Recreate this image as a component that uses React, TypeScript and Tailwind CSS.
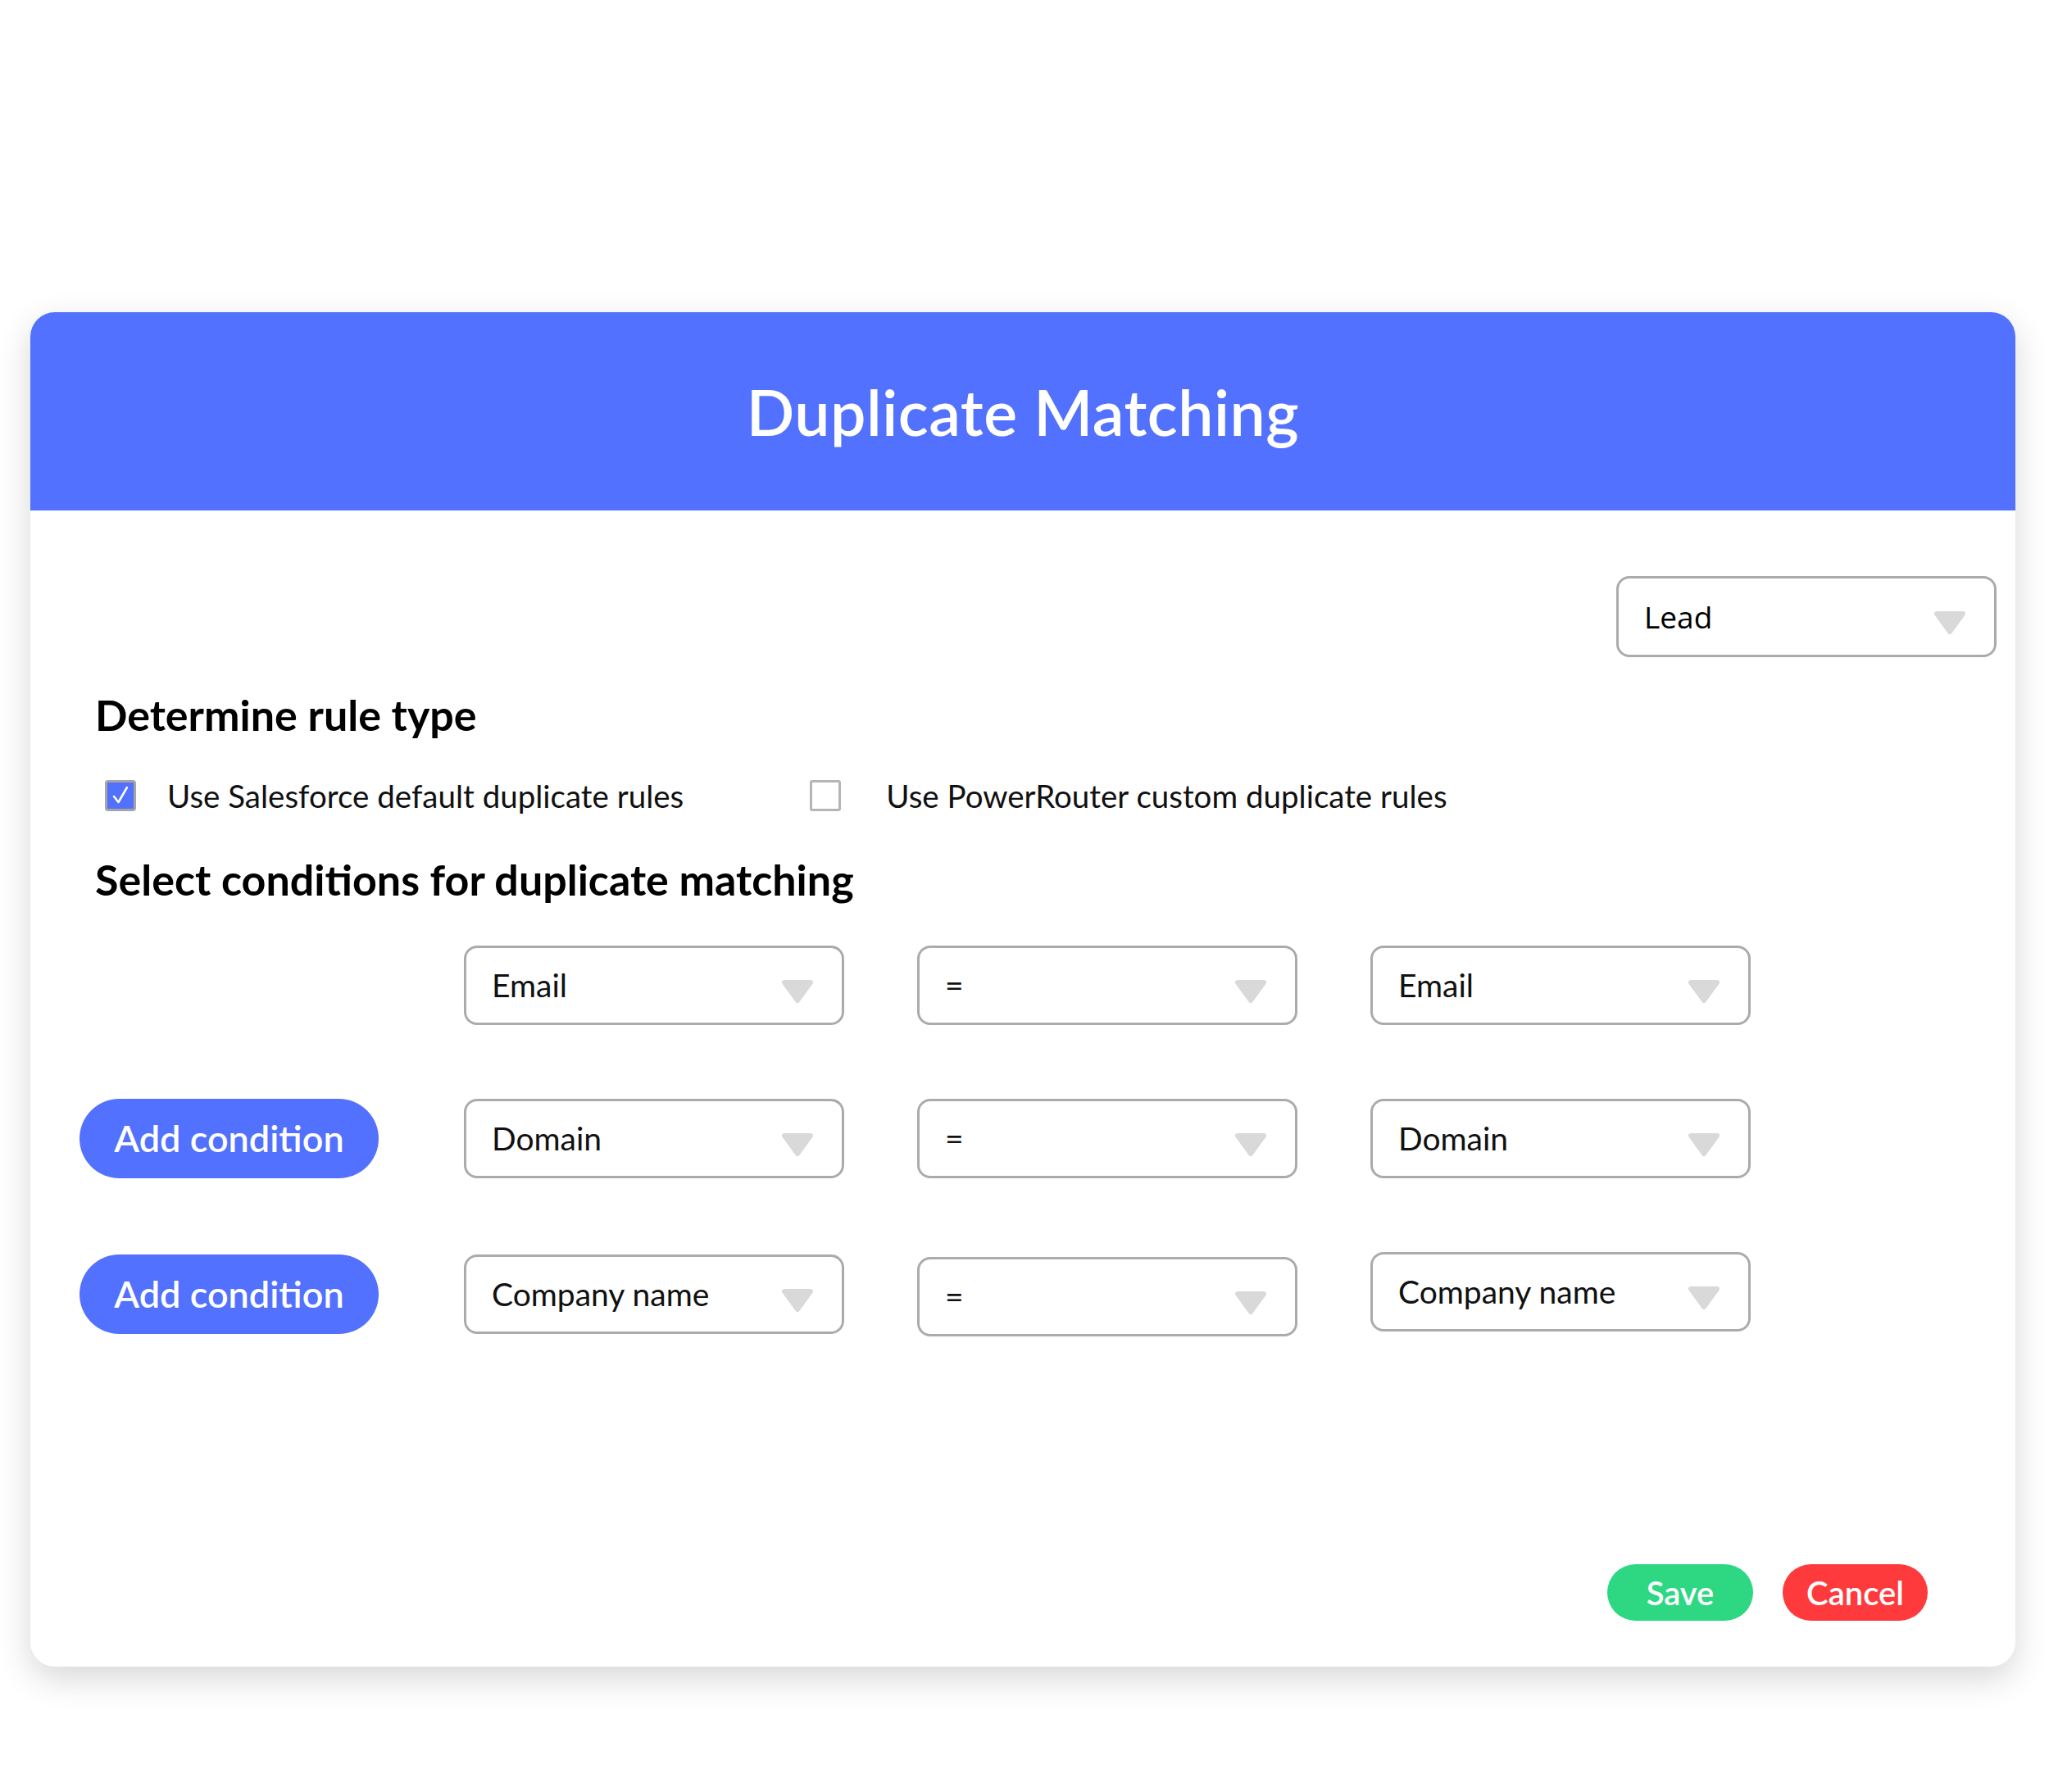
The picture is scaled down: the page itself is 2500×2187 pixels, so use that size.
import React from "react";

const Tri = () => (
  <svg width="40" height="30" viewBox="0 0 40 30" className="shrink-0 mt-[14px]">
    <polygon points="4,4 36,4 20,26" fill="#D9D9D9" stroke="#D9D9D9" strokeWidth="6" strokeLinejoin="round" />
  </svg>
);

const Select = ({ label, className = "" }: { label: string; className?: string }) => (
  <div
    className={
      "w-[464px] h-[97px] shrink-0 border-[3px] border-[#ABABAB] rounded-[16px] bg-white flex items-center justify-between pl-[31px] pr-[34px] text-[39px] text-[#111] " +
      className
    }
  >
    <span className="leading-none">{label}</span>
    <Tri />
  </div>
);

const AddBtn = () => (
  <button className="w-[365px] h-[97px] shrink-0 rounded-full bg-[#5271FF] text-white text-[45px] font-semibold leading-none flex items-center justify-center">
    Add condition
  </button>
);

export default function App() {
  return (
    <div
      className="w-[2500px] h-[2187px] bg-white pt-[381px] pl-[37px]"
      style={{ fontFamily: "Lato, 'Noto Sans', sans-serif" }}
    >
      <div className="w-[2422px] h-[1653px] bg-white rounded-[30px] shadow-[0_14px_40px_rgba(0,0,0,0.16)] flex flex-col overflow-hidden">
        <div className="h-[242px] bg-[#5271FF] flex items-center justify-center shrink-0">
          <h1 className="text-white text-[77px] font-semibold leading-none tracking-[0.5px]">Duplicate Matching</h1>
        </div>
        <div className="flex-1 flex flex-col">
          <div className="flex justify-end pr-[23px] pt-[80px]">
            <div className="w-[464px] h-[99px] border-[3px] border-[#ABABAB] rounded-[16px] flex items-center justify-between pl-[31px] pr-[34px] text-[37px] text-black" style={{ fontFamily: "'Open Sans', sans-serif" }}>
              <span className="leading-none">Lead</span>
              <Tri />
            </div>
          </div>
          <h2 className="ml-[79px] mt-[42px] text-[52px] leading-[56px] font-bold text-black">Determine rule type</h2>
          <div className="mt-[49px] ml-[91px] h-[44px] flex items-center text-[38.5px] text-[#111]">
            <div className="w-[38px] h-[38px] rounded-[4px] border-[3px] border-[#A5A5A5] bg-[#5271FF] flex items-center justify-center">
              <svg width="26" height="26" viewBox="0 0 26 26">
                <path d="M5 14 L10.5 21 L21 3" fill="none" stroke="white" strokeWidth="2.5" strokeLinecap="round" strokeLinejoin="round" />
              </svg>
            </div>
            <span className="ml-[38px] leading-none">Use Salesforce default duplicate rules</span>
            <div className="ml-[154px] w-[38px] h-[38px] rounded-[3px] border-[3px] border-[#B5B5B5] bg-white" />
            <span className="ml-[55px] leading-none">Use PowerRouter custom duplicate rules</span>
          </div>
          <h2 className="ml-[79px] mt-[52px] text-[52px] leading-[56px] font-bold text-black">Select conditions for duplicate matching</h2>
          <div className="mt-[53px] ml-[60px] flex flex-col gap-[90px]">
            <div className="flex items-center">
              <div className="w-[365px] shrink-0" />
              <div className="ml-[104px] flex gap-[89px]">
                <Select label="Email" />
                <Select label="=" />
                <Select label="Email" />
              </div>
            </div>
            <div className="flex items-center">
              <AddBtn />
              <div className="ml-[104px] flex gap-[89px]">
                <Select label="Domain" />
                <Select label="=" />
                <Select label="Domain" />
              </div>
            </div>
            <div className="flex items-center">
              <AddBtn />
              <div className="ml-[104px] flex gap-[89px] items-center">
                <Select label="Company name" />
                <Select label="=" className="mt-[6px]" />
                <Select label="Company name" className="-mt-[6px]" />
              </div>
            </div>
          </div>
          <div className="flex-1" />
          <div className="flex justify-end gap-[36px] pr-[107px] pb-[56px]">
            <button className="w-[178px] h-[69px] rounded-full bg-[#2ED882] text-white text-[40px] font-semibold leading-none">Save</button>
            <button className="w-[177px] h-[69px] rounded-full bg-[#FF3A3D] text-white text-[40px] font-semibold leading-none">Cancel</button>
          </div>
        </div>
      </div>
    </div>
  );
}
